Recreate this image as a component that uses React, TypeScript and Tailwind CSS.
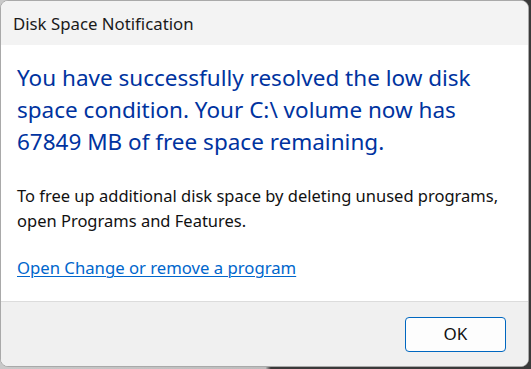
import React from "react";

export default function App() {
  const font = { fontFamily: '"Segoe UI", "Noto Sans", "Open Sans", sans-serif' };
  return (
    <div
      className="w-[531px] h-[369px] bg-[linear-gradient(90deg,#c9c9c9_0%,#bdbdbd_50%,#3a3a3a_51%,#3a3a3a_100%)] overflow-hidden"
      style={font}
    >
      <div className="w-[529px] h-[367px] flex flex-col rounded-[8px] border border-[#a9a9a9] bg-white overflow-hidden">
        <div className="h-[44px] shrink-0 bg-[#f3f3f3] flex items-center pl-[12px] pt-[1px]">
          <span className="text-[16.8px] text-[#1a1a1a]">Disk Space Notification</span>
        </div>
        <div className="flex-1 bg-white pl-[16px] pt-[17px]">
          <div className="text-[22.5px] leading-[32px] text-[#0033a0]">
            <div>You have successfully resolved the low disk</div>
            <div>space condition. Your C:\ volume now has</div>
            <div>67849 MB of free space remaining.</div>
          </div>
          <div className="mt-[25px] text-[16.5px] leading-[25px] text-[#111]">
            <div>To free up additional disk space by deleting unused programs,</div>
            <div>open Programs and Features.</div>
          </div>
          <div className="mt-[23px] text-[16.7px] leading-[24px]">
            <a className="text-[#0066cc] underline underline-offset-[2px] decoration-[1px]" href="#">
              Open Change or remove a program
            </a>
          </div>
        </div>
        <div className="h-[65px] shrink-0 border-t border-[#dcdcdc] bg-[#f0f0f0] flex items-center justify-end pr-[22px]">
          <button className="w-[101px] h-[35px] rounded-[4px] border border-[#0067c0] bg-[#fdfdfd] text-[17px] text-[#111] flex items-center justify-center">
            OK
          </button>
        </div>
      </div>
    </div>
  );
}
